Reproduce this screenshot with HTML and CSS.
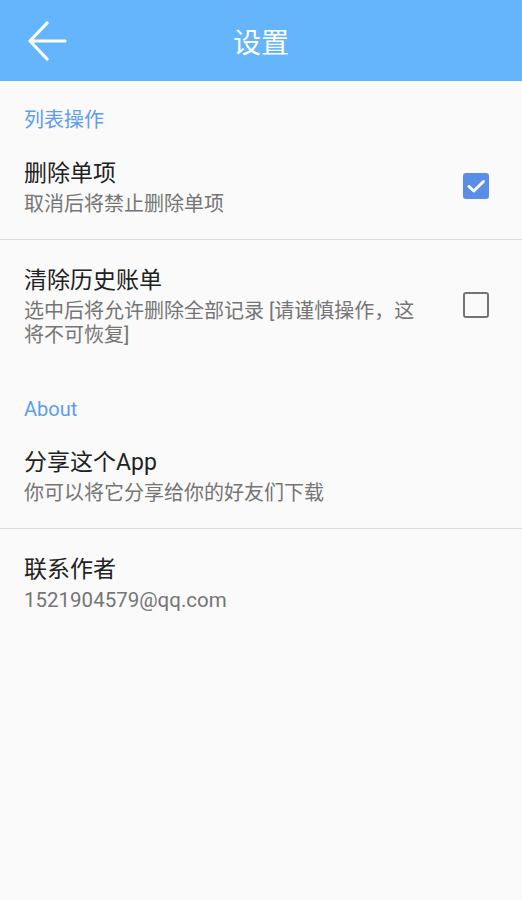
FILE: index.html
```html
<!DOCTYPE html>
<html lang="zh-CN">

<head>
    <meta charset="UTF-8">
    <meta name="viewport" content="width=device-width, initial-scale=1.0">
    <title>设置</title>
    <link rel="stylesheet" href="styles.css">
</head>

<body>
    <header class="toolbar">
        <div class="back">
            <svg width="40" height="40" viewBox="0 0 40 40">
                <path d="M3 20 H38 M20 2 L3 20 L20 38" fill="none" stroke="#fff" stroke-width="3.2" stroke-linecap="round" stroke-linejoin="round" />
            </svg>
        </div>
        <h1 class="title">设置</h1>
    </header>

    <main class="settings">
        <div class="category">列表操作</div>

        <div class="item">
            <div class="text">
                <div class="item-title">删除单项</div>
                <div class="item-sub">取消后将禁止删除单项</div>
            </div>
            <div class="checkbox checked">
                <svg width="26" height="26" viewBox="0 0 26 26">
                    <path d="M6 13.5 L10.8 18 L20.5 8.5" fill="none" stroke="#fff" stroke-width="3" stroke-linecap="round" stroke-linejoin="round" />
                </svg>
            </div>
        </div>
        <div class="divider"></div>

        <div class="item">
            <div class="text">
                <div class="item-title">清除历史账单</div>
                <div class="item-sub">选中后将允许删除全部记录 [请谨慎操作，这将不可恢复]</div>
            </div>
            <div class="checkbox"></div>
        </div>

        <div class="category">About</div>

        <div class="item">
            <div class="text">
                <div class="item-title">分享这个App</div>
                <div class="item-sub">你可以将它分享给你的好友们下载</div>
            </div>
        </div>
        <div class="divider"></div>

        <div class="item">
            <div class="text">
                <div class="item-title">联系作者</div>
                <div class="item-sub email">1521904579@qq.com</div>
            </div>
        </div>
    </main>
</body>

</html>
```

FILE: styles.css
```css
/* Reset */
* {
    margin: 0;
    padding: 0;
    box-sizing: border-box;
}

body {
    background-color: #fafafa;
    font-family: Roboto, "Noto Sans CJK SC", sans-serif;
    height: 100vh;
}

/* Top bar */
.toolbar {
    height: 81px;
    background-color: #64b5fc;
    display: flex;
    align-items: center;
    position: relative;
}

.back {
    width: 40px;
    height: 40px;
    margin-left: 27px;
    display: flex;
}

.title {
    position: absolute;
    left: 0;
    right: 0;
    text-align: center;
    color: #fff;
    font-size: 28px;
    font-weight: normal;
    pointer-events: none;
}

/* Section label */
.category {
    padding: 27px 24px 1px;
    font-size: 20px;
    line-height: 24px;
    color: #5e9cf0;
}

/* Preference row */
.item {
    display: flex;
    align-items: center;
    padding: 23px 33px 23px 24px;
}

.text {
    flex: 1;
}

.item-title {
    font-size: 23px;
    line-height: 36px;
    color: #212121;
}

.item-sub {
    font-size: 20px;
    line-height: 24px;
    color: #757575;
}

.item-sub.email {
    font-size: 20.5px;
}

.checkbox {
    width: 26px;
    height: 26px;
    margin-left: 36px;
    border: 2.6px solid #747474;
    border-radius: 3px;
    flex-shrink: 0;
}

.checkbox.checked {
    border: none;
    background-color: #5a8ee6;
    display: flex;
}

.divider {
    height: 1px;
    background-color: #dcdcdc;
}
```
